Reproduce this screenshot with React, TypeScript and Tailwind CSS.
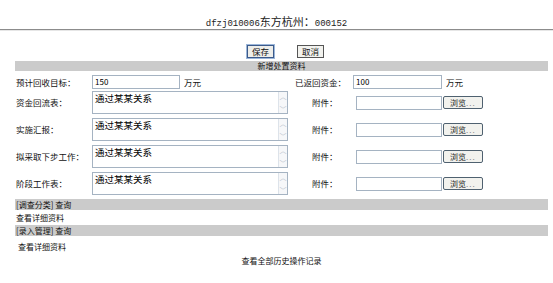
const cjk = '"Noto Sans CJK SC", "Liberation Sans", sans-serif';

function Field({ value, w }: { value: string; w: string }) {
  return (
    <div className={`${w} h-[14px] border border-[#a5b3c2] bg-white flex items-center pl-[2px] text-[8px] text-black`}>
      {value}
    </div>
  );
}

function Browse() {
  return (
    <div className="w-[40px] h-[13px] ml-px rounded-[2px] border border-[#4f6170] bg-[#f2f2ee] flex items-center pl-[6px] text-[8px] text-[#222]">
      浏览<span className="text-[#888] tracking-[1px]">...</span>
    </div>
  );
}

function Memo({ text }: { text: string }) {
  return (
    <div className="w-[196px] h-[23px] border border-[#a5b3c2] bg-white flex">
      <div className="flex-1 pl-[2px] pt-px text-[9.5px] leading-[11px] text-black">{text}</div>
      <div className="w-[9px] border-l border-[#dde3ea] bg-[#f6f7f9] flex flex-col justify-between items-center text-[7px] leading-[8px] text-[#b8c2cc]">
        <span>︿</span>
        <span>﹀</span>
      </div>
    </div>
  );
}

function MemoRow({ label, text, first }: { label: string; text: string; first?: boolean }) {
  return (
    <div className={`flex items-center h-[23px] ${first ? 'mt-[2px]' : 'mt-[4px]'}`}>
      <div className="w-[77px] pl-px text-[8.5px] text-[#111]">{label}</div>
      <Memo text={text} />
      <div className="w-[68px] pl-[24px] text-[8.5px] text-[#111]">附件：</div>
      <Field value="" w="w-[86px]" />
      <Browse />
    </div>
  );
}

export default function App() {
  return (
    <div className="w-[553px] h-[283px] bg-white" style={{ fontFamily: cjk }}>
      <div className="pt-[13px] h-[29px] text-center leading-[12px] text-[#222]">
        <span className="text-[9px]" style={{ fontFamily: '"Liberation Mono", monospace' }}>dfzj010006</span>
        <span className="text-[11px]">东方杭州：</span>
        <span className="text-[9px]" style={{ fontFamily: '"Liberation Mono", monospace' }}>000152</span>
      </div>
      <div className="h-px bg-[#8c8c8c]" />
      <div className="h-px bg-[#e6e6e6]" />

      <div className="ml-[15px] w-[533px]">
        <div className="flex justify-center gap-[23px] pt-[14px] pl-[8px]">
          <div className="h-[13px] px-[4px] border border-[#3c5a8a] outline outline-1 outline-[#9bb6d9] bg-[#eeeeea] flex items-center text-[8.5px] text-[#111]">保存</div>
          <div className="h-[13px] px-[4px] border border-[#555] bg-[#f2f2ee] flex items-center text-[8.5px] text-[#111]">取消</div>
        </div>

        <div className="mt-[3px] h-[10px] bg-[#cbcbcb] flex items-center justify-center text-[8px] text-[#111]">新增处置资料</div>

        <div className="flex items-center h-[14px] mt-[4px]">
          <div className="w-[77px] pl-px text-[8.5px] text-[#111]">预计回收目标：</div>
          <Field value="150" w="w-[88px]" />
          <div className="w-[115px] pl-[4px] text-[8.5px] text-[#111]">万元</div>
          <div className="w-[58px] text-[8.5px] text-[#111] whitespace-nowrap">已返回资金：</div>
          <Field value="100" w="w-[89px]" />
          <div className="pl-[4px] text-[8.5px] text-[#111]">万元</div>
        </div>

        <MemoRow label="资金回流表：" text="通过某某关系" first />
        <MemoRow label="实施汇报：" text="通过某某关系" />
        <MemoRow label="拟采取下步工作：" text="通过某某关系" />
        <MemoRow label="阶段工作表：" text="通过某某关系" />

        <div className="mt-[4px] h-[11px] bg-[#cbcbcb] flex items-center pl-px text-[8px] text-[#111]">[调查分类] 查询</div>
        <div className="h-[15px] flex items-center pl-px text-[8px] text-[#111]">查看详细资料</div>
        <div className="h-[11px] bg-[#cbcbcb] flex items-center pl-px text-[8px] text-[#111]">[录入管理] 查询</div>
        <div className="h-[19px] flex items-center pl-[3px] pt-[3px] text-[8px] text-[#111]">查看详细资料</div>
        <div className="h-[12px] flex items-center justify-center text-[8px] text-[#111]">查看全部历史操作记录</div>
      </div>
    </div>
  );
}
